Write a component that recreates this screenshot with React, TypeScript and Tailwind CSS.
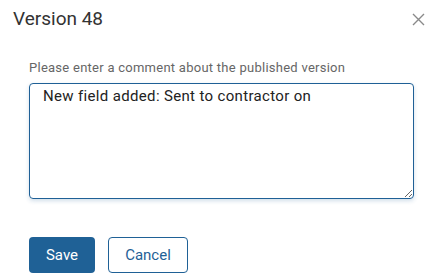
export default function App() {
  return (
    <div className="w-[444px] h-[278px] bg-white font-['Roboto',sans-serif] overflow-hidden">
      <div className="flex items-start justify-between pl-[13px] pr-[19px] pt-[7px]">
        <h2 className="text-[19px] leading-6 text-[#333333]">Version 48</h2>
        <button className="mt-[6px] text-[#8a8a8a]" aria-label="Close">
          <svg width="13" height="13" viewBox="0 0 13 13" fill="none" stroke="currentColor" strokeWidth="1.4">
            <path d="M1 1l11 11M12 1L1 12" />
          </svg>
        </button>
      </div>

      <div className="pl-[29px] pr-[30px] pt-[29px]">
        <label className="block text-[13px] leading-4 tracking-[0.26px] text-[#666666]">
          Please enter a comment about the published version
        </label>
        <textarea
          defaultValue="New field added: Sent to contractor on"
          className="mt-[7px] block w-full h-[116px] rounded-[4px] border border-[#1f6096] px-[13px] pt-[2px] text-[15px] leading-5 tracking-[0.34px] text-[#222222] shadow-[0_2px_4px_rgba(31,96,150,0.2)] outline-none"
        />

        <div className="flex gap-[13px] mt-[38px]">
          <button className="w-[66px] h-[36px] rounded-[4px] bg-[#1f6196] text-white text-[15px]">
            Save
          </button>
          <button className="w-[80px] h-[36px] rounded-[4px] border border-[#1f6196] bg-white text-[#1f6196] text-[15px]">
            Cancel
          </button>
        </div>
      </div>
    </div>
  )
}
